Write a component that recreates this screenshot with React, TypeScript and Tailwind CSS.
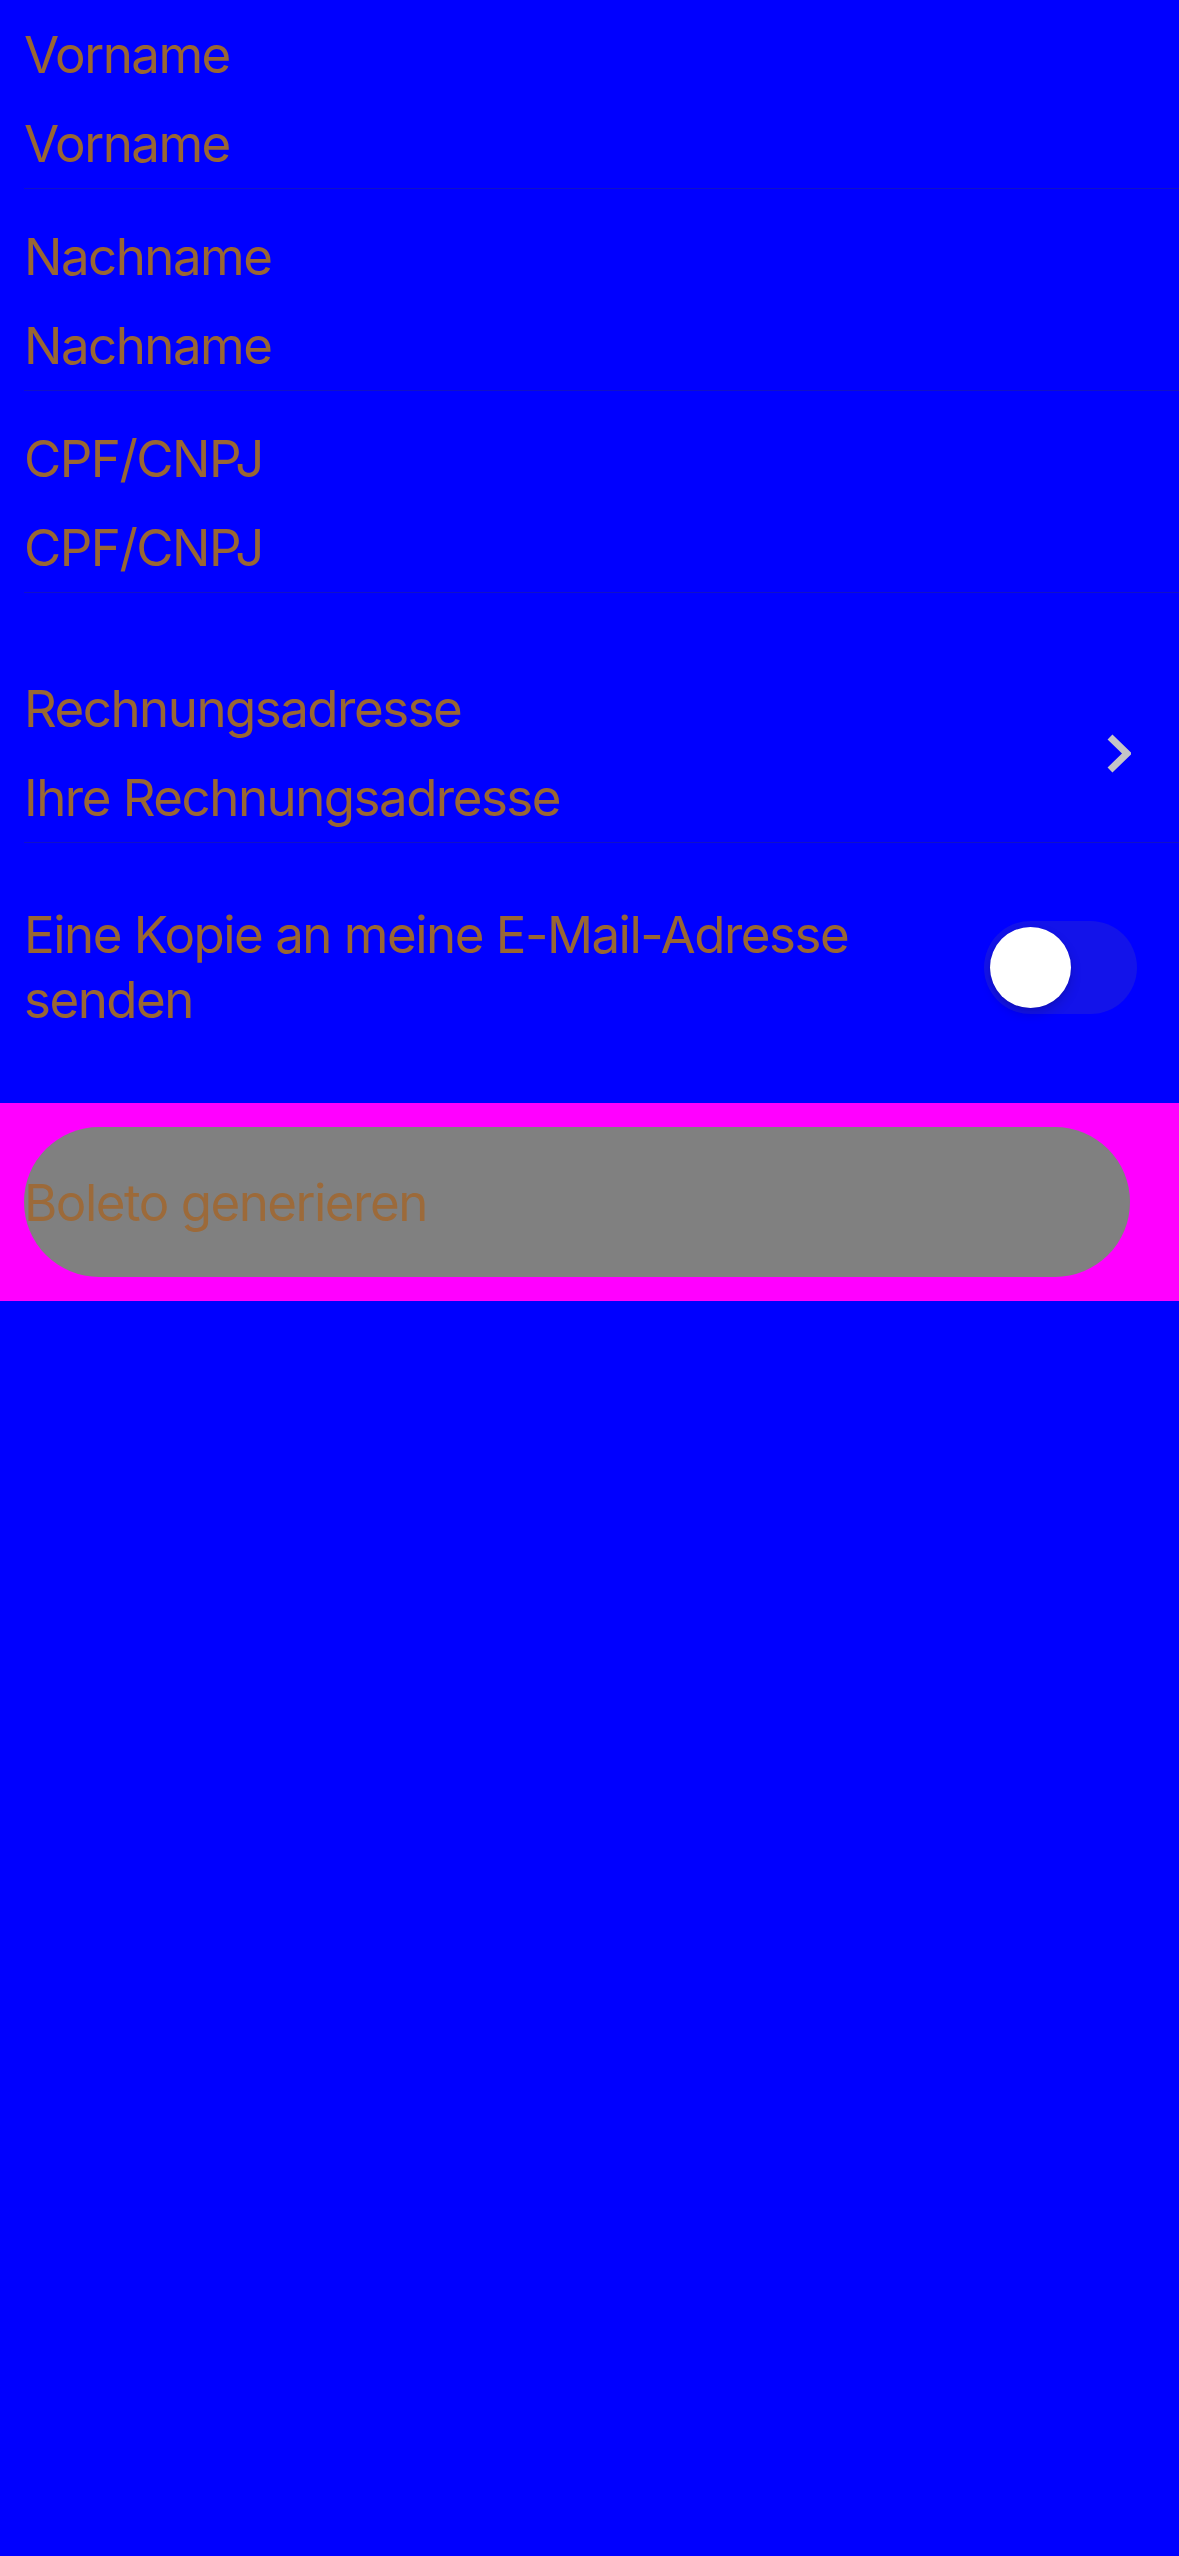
import React, { useState } from "react";

const font = { fontFamily: "Inter, 'Noto Sans', sans-serif" };

interface FieldRowProps {
  label: string;
  value: string;
  first?: boolean;
}

// one text field: label over value, thin separator underneath
function FieldRow({ label, value, first }: FieldRowProps) {
  return (
    <div className={`ml-[24px] border-b border-[#1111c8] pb-[14px] ${first ? "pt-[24px]" : "pt-[37px]"}`}>
      <p className="h-[61px] text-[51px] leading-[61px] tracking-[-1.5px] text-[#996633]">{label}</p>
      <p className="mt-[28px] h-[61px] text-[51px] leading-[61px] tracking-[-1.5px] text-[#996633]">{value}</p>
    </div>
  );
}

function Chevron() {
  return (
    <svg width="24" height="39" viewBox="0 0 24 39" fill="none">
      <polyline points="3,3 20,19.5 3,36" stroke="#c4c4c7" strokeWidth="7" strokeLinejoin="miter" />
    </svg>
  );
}

function Toggle({ on, onChange }: { on: boolean; onChange: (v: boolean) => void }) {
  return (
    <button
      type="button"
      onClick={() => onChange(!on)}
      className={`ml-auto flex h-[93px] w-[153px] shrink-0 items-center rounded-full p-[6px] ${on ? "justify-end bg-[#34c759]" : "justify-start bg-[#1313ea]"}`}
    >
      <span className="h-[81px] w-[81px] rounded-full bg-white shadow-[0_6px_12px_rgba(0,0,0,0.15),0_1px_3px_rgba(0,0,0,0.1)]" />
    </button>
  );
}

export default function App() {
  const [sendCopy, setSendCopy] = useState(false);

  return (
    <div className="min-h-[2556px] w-full bg-[#0000ff]" style={font}>
      <FieldRow label="Vorname" value="Vorname" first />
      <FieldRow label="Nachname" value="Nachname" />
      <FieldRow label="CPF/CNPJ" value="CPF/CNPJ" />

      {/* Rechnungsadresse */}
      <div className="mt-[48px] ml-[24px] flex items-center border-b border-[#1111c8] pt-[37px] pb-[14px] pr-[48px]">
        <div className="flex-1">
          <p className="h-[61px] text-[51px] leading-[61px] tracking-[-1.5px] text-[#996633]">Rechnungsadresse</p>
          <p className="mt-[28px] h-[61px] text-[51px] leading-[61px] tracking-[-1.5px] text-[#996633]">Ihre Rechnungsadresse</p>
        </div>
        <Chevron />
      </div>

      {/* Kopie per Mail */}
      <div className="flex items-center pt-[59px] pb-[71px] pl-[24px] pr-[42px]">
        <div className="flex-1">
          <p className="max-w-[880px] text-[51px] leading-[65px] tracking-[-1.5px] text-[#996633]">
            Eine Kopie an meine E-Mail-Adresse senden
          </p>
        </div>
        <Toggle on={sendCopy} onChange={setSendCopy} />
      </div>

      {/* Footer-Button */}
      <div className="bg-[#ff00ff] py-[24px] pl-[24px] pr-[49px]">
        <button
          type="button"
          className="flex h-[150px] w-full items-center rounded-full bg-[#808080] text-left text-[51px] leading-[61px] tracking-[-1.5px] text-[#9c6a3a]"
        >
          Boleto generieren
        </button>
      </div>
    </div>
  );
}
